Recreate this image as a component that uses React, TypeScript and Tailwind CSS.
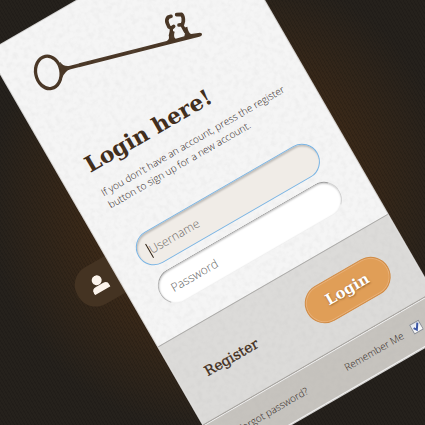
import React from "react";

const slab = "font-['DejaVu_Serif',serif]";

function KeyDrawing() {
  return (
    <svg className="block h-[130px] w-full overflow-visible" viewBox="0 0 265 130" preserveAspectRatio="xMinYMin meet" aria-hidden="true">
      <g transform="rotate(30) translate(12 -52) scale(0.33333)" fill="none" stroke="#483524" strokeLinecap="round" strokeLinejoin="round">
        <ellipse cx="145" cy="217" rx="38" ry="49" strokeWidth="10" transform="rotate(-11 145 217)" />
        <path d="M180 185 Q190 201 210 197 L500 123 Q510 118 506 106 L511 90 L524 95 Q519 112 527 116 L553 109 Q557 99 550 84 L562 80 Q564 97 573 102 L600 98 Q607 98 606 104 Q605 109 598 110 L212 208 Q195 212 184 238 Z" fill="#483524" stroke="none" />
        <path d="M513 49 L504 52 Q498 60 502 70 L507 81 L515 84 L521 79" strokeWidth="11" />
        <path d="M530 44 L545 43 Q551 50 550 64 L547 74 L537 75" strokeWidth="11" />
        <path d="M514 88 L514 104 M547 78 L556 94" strokeWidth="10" />
      </g>
    </svg>
  );
}

function Paper() {
  return (
    <svg className="pointer-events-none absolute inset-0 h-full w-full opacity-10" aria-hidden="true">
      <filter id="paper">
        <feTurbulence type="fractalNoise" baseFrequency="0.2" numOctaves="4" seed="4" />
        <feColorMatrix values="0 0 0 0 0.4  0 0 0 0 0.4  0 0 0 0 0.4  2 0 0 0 -0.8" />
      </filter>
      <rect width="100%" height="100%" filter="url(#paper)" />
    </svg>
  );
}

export default function App() {
  return (
    <main className="flex h-screen items-start overflow-hidden bg-[#25211c] bg-[repeating-linear-gradient(60deg,rgba(0,0,0,0.12)_0px,rgba(0,0,0,0.12)_1px,transparent_1px,transparent_3px),radial-gradient(circle_at_222px_200px,#49301a_0px,#3b2918_130px,#25211c_235px)] pt-[52px] font-['Open_Sans',sans-serif]">
      <div className="relative -ml-3 w-[265px] shrink-0 origin-top-left -rotate-30">
        <button
          type="button"
          aria-label="Account"
          className="absolute top-[235px] -left-11 flex h-[42px] w-11 items-center rounded-l-[20px] bg-[#443322] pl-[15px]"
        >
          <svg className="h-[18px] w-[18px]" viewBox="0 0 18 18" fill="#fcf4ec" aria-hidden="true">
            <circle cx="9" cy="5" r="5" />
            <path d="M0 17 V15 Q0 10.500 5 10.500 H13 Q18 10.500 18 15 V17 Z" />
          </svg>
        </button>

        <form className="relative isolate bg-[#f5f5f5] shadow-[0_0_0_1px_rgba(255,255,255,0.8)]" onSubmit={(e) => e.preventDefault()}>
          <section className="h-[340px] px-7">
            <div className="-mx-7">
              <KeyDrawing />
            </div>
            <h1 className={`${slab} text-[22px] leading-9 font-bold whitespace-nowrap text-[#402c1a]`}>Login here!</h1>
            <p className="mt-[6px] text-[10px] leading-[14px] font-light whitespace-nowrap text-[#2b2118]">
              If you don&apos;t have an account, press the register
              <br />
              button to sign up for a new account.
            </p>
            <div className="relative z-10 mt-[34px] w-[207px]">
              <input
                aria-label="Username"
                placeholder="Username"
                className="block h-9 w-full rounded-full border border-[#79b4e4] bg-[#f0ece7] px-3 text-xs font-light text-[#402c1a] shadow-[inset_0_2px_2px_rgba(0,0,0,0.2)] outline-none placeholder:text-[#6f6b67]"
              />
              <span className="absolute top-[11px] left-3 h-4 w-px bg-[#2b1d10]" />
            </div>
            <input
              type="password"
              aria-label="Password"
              placeholder="Password"
              className="relative z-10 mt-2 block h-9 w-[207px] rounded-full border border-t-[#9c9c9c] border-r-[#d0d0d0] border-b-[#f0f0f0] border-l-[#b8b8b8] bg-white px-3 text-xs font-light text-[#402c1a] shadow-[inset_0_1px_2px_rgba(0,0,0,0.25)] outline-none placeholder:text-[#666666]"
            />
          </section>

          <section className="flex h-[90px] items-center justify-between border-t border-[#aaa9a7] bg-[#dcdbd9] pr-[26px] pl-7">
            <button type="button" className={`${slab} relative z-10 text-sm text-[#402c1a] [-webkit-text-stroke:0.3px_#402c1a]`}>
              Register
            </button>
            <button
              type="submit"
              className={`${slab} relative z-10 h-10 w-[93px] rounded-[20px] border border-[#d08b45] bg-[#e09e57] text-[15px] font-bold text-white shadow-[inset_0_0_0_1px_#e8b078] [text-shadow:0_1px_2px_rgba(90,50,10,0.6)]`}
            >
              Login
            </button>
          </section>

          <section className="flex h-11 items-center justify-between border-t border-[#a5a29e] bg-[#c6c3be] pr-[26px] pl-7 text-[10px] font-light text-[#2b2118] shadow-[inset_0_1px_0_#f2f2f2,inset_0_-1px_0_#f2f2f2]">
            <a href="#forgot">Forgot password?</a>
            <label className="flex items-center gap-[10px]">
              Remember Me
              <input
                type="checkbox"
                defaultChecked
                className="peer h-[11px] w-[11px] appearance-none border border-[#8d8f94] bg-[#eef1f6] bg-[linear-gradient(#e2e6ee,#ffffff)]"
              />
              <svg className="pointer-events-none -ml-[21px] hidden h-[11px] w-[11px] peer-checked:block" viewBox="0 0 11 11" fill="none" stroke="#3a55a5" strokeWidth="2" aria-hidden="true">
                <path d="M2.500 5 L4.500 8 L8.500 2" />
              </svg>
            </label>
          </section>
          <Paper />
        </form>
      </div>
    </main>
  );
}
